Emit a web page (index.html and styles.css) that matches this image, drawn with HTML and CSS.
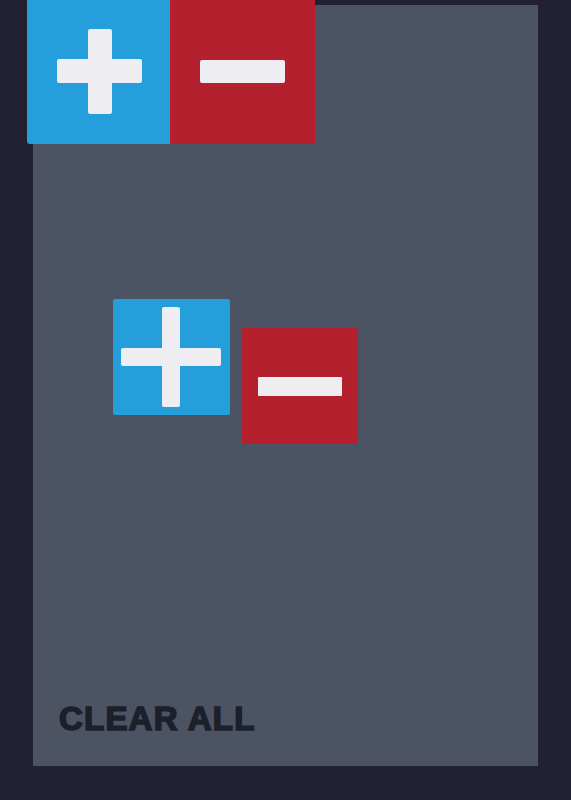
FILE: index.html
```html
<!DOCTYPE html>
<html>
<head>
<meta charset="utf-8">
<link rel="stylesheet" href="styles.css">
</head>
<body>
<div class="panel">
  <div class="toolbar">
    <button class="tool tool-plus" aria-label="Add"><span class="bar-h"></span><span class="bar-v"></span></button>
    <button class="tool tool-minus" aria-label="Remove"><span class="bar-h"></span></button>
  </div>
  <div class="item item-plus"><span class="bar-h"></span><span class="bar-v"></span></div>
  <div class="item item-minus"><span class="bar-h"></span></div>
  <button class="clear">CLEAR ALL</button>
</div>
</body>
</html>
```
FILE: styles.css
```css
html, body {
  margin: 0;
  padding: 0;
  background: #222133;
  height: 800px;
  overflow: hidden;
}
.panel {
  position: relative;
  margin: 5px 33px 0 33px;
  height: 761px;
  background: #4c5363;
  display: flex;
  flex-direction: column;
  justify-content: flex-end;
  align-items: flex-start;
  padding: 0 0 27px 26px;
  box-sizing: border-box;
}
.toolbar {
  position: absolute;
  left: -6px;
  top: -5px;
  display: flex;
  height: 144px;
  border-bottom-left-radius: 3px;
  overflow: hidden;
}
.tool {
  position: relative;
  border: 0;
  padding: 0;
  margin: 0;
  height: 144px;
}
.tool-plus { width: 143px; background: #259fdb; }
.tool-minus { width: 145px; background: #b5202e; }
.tool .bar-h, .tool .bar-v, .item .bar-h, .item .bar-v {
  position: absolute;
  background: #eeeef2;
  border-radius: 2px;
}
.tool-plus .bar-h { left: 30px; top: 59px; width: 85px; height: 24px; }
.tool-plus .bar-v { left: 61px; top: 29px; width: 24px; height: 85px; }
.tool-minus .bar-h { left: 30px; top: 60px; width: 85px; height: 23px; }

.item {
  position: absolute;
  height: 116px;
  border-radius: 2px;
}
.item-plus { left: 80px; top: 294px; width: 117px; background: #259fdb; }
.item-minus { left: 209px; top: 323px; width: 116px; background: #b5202e; border-radius: 0; }
.item-plus .bar-h { left: 8px; top: 49px; width: 100px; height: 18px; }
.item-plus .bar-v { left: 49px; top: 8px; width: 18px; height: 100px; }
.item-minus .bar-h { left: 16px; top: 49px; width: 84px; height: 19px; border-radius: 1px; }

.clear {
  background: none;
  border: 0;
  padding: 0;
  margin: 0;
  font-family: "Liberation Sans", Arial, sans-serif;
  font-weight: 700;
  font-size: 33px;
  line-height: 40px;
  letter-spacing: 1.2px;
  color: #1b202b;
  -webkit-text-stroke: 1.6px #1b202b;
}
```
